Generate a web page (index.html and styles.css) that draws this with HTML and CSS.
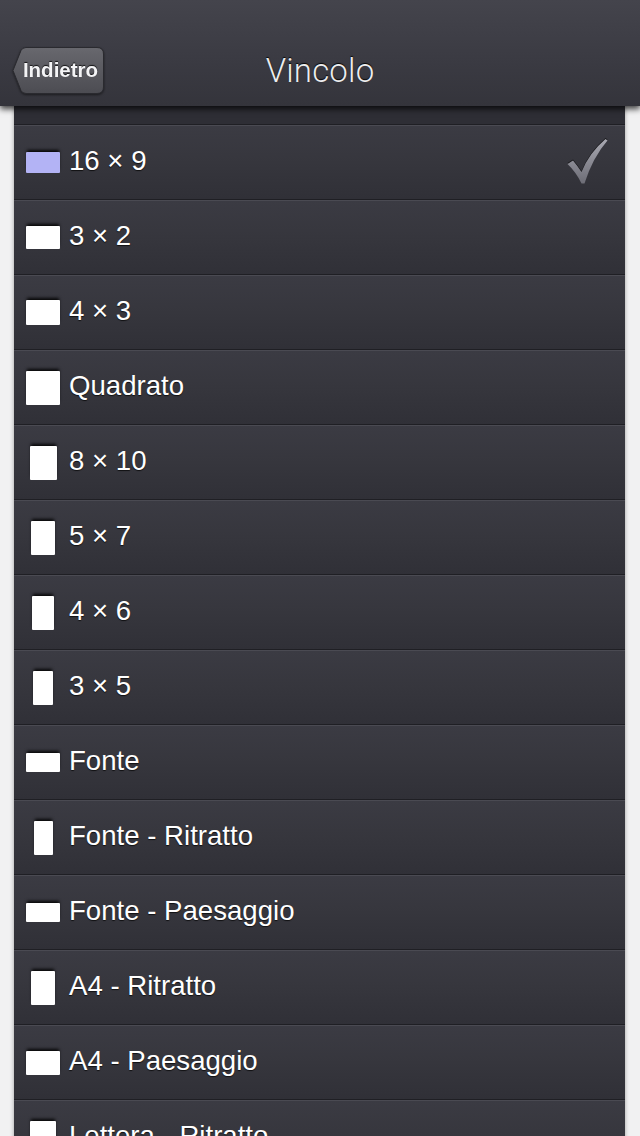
FILE: index.html
```html
<!DOCTYPE html>
<html lang="it">
<head>
<meta charset="utf-8">
<title>Vincolo</title>
<link rel="stylesheet" href="styles.css">
</head>
<body>
<header class="navbar">
  <div class="nav-left">
    <button class="back-btn">
      <svg class="back-shape" width="92" height="47" viewBox="0 0 92 47" aria-hidden="true">
        <defs>
          <linearGradient id="bg" x1="0" y1="0" x2="0" y2="1">
            <stop offset="0" stop-color="#68686e"/>
            <stop offset="1" stop-color="#4c4c52"/>
          </linearGradient>
        </defs>
        <path d="M1 23.5 L9 3.5 Q10.5 0.5 14 0.5 L85 0.5 Q91.5 0.5 91.5 7 L91.5 40 Q91.5 46.5 85 46.5 L14 46.5 Q10.5 46.5 9 43.5 Z" fill="url(#bg)" stroke="#2a2a2f" stroke-width="1"/>
      </svg>
      <span class="back-label">Indietro</span>
    </button>
  </div>
  <h1 class="nav-title">Vincolo</h1>
  <div class="nav-right"></div>
</header>

<main class="list">
  <div class="list-top"></div>
  <div class="row">
    <span class="icon-box"><span class="icon selected" style="width:34px;height:21px"></span></span>
    <span class="label">16 × 9</span>
    <svg class="check" width="41" height="47" viewBox="0 0 41 47" aria-hidden="true">
      <defs>
        <linearGradient id="cg" x1="0" y1="0" x2="0" y2="1">
          <stop offset="0" stop-color="#a9a9b2"/>
          <stop offset="1" stop-color="#6d6d76"/>
        </linearGradient>
      </defs>
      <path d="M0.5 26 L6 22.5 Q11 28.5 14.5 34 Q22 15 38.5 1 L40.5 2.5 Q26 19 17.5 45.5 L14.5 45.5 Q9 34 0.5 26 Z" fill="url(#cg)"/>
    </svg>
  </div>
  <div class="row"><span class="icon-box"><span class="icon" style="width:35px;height:23px"></span></span><span class="label">3 × 2</span></div>
  <div class="row"><span class="icon-box"><span class="icon" style="width:34px;height:25px"></span></span><span class="label">4 × 3</span></div>
  <div class="row"><span class="icon-box"><span class="icon" style="width:34px;height:34px"></span></span><span class="label">Quadrato</span></div>
  <div class="row"><span class="icon-box"><span class="icon" style="width:27px;height:34px"></span></span><span class="label">8 × 10</span></div>
  <div class="row"><span class="icon-box"><span class="icon" style="width:24px;height:34px"></span></span><span class="label">5 × 7</span></div>
  <div class="row"><span class="icon-box"><span class="icon" style="width:22px;height:34px"></span></span><span class="label">4 × 6</span></div>
  <div class="row"><span class="icon-box"><span class="icon" style="width:20px;height:34px"></span></span><span class="label">3 × 5</span></div>
  <div class="row"><span class="icon-box"><span class="icon" style="width:34px;height:19px"></span></span><span class="label">Fonte</span></div>
  <div class="row"><span class="icon-box"><span class="icon" style="width:19px;height:34px"></span></span><span class="label">Fonte - Ritratto</span></div>
  <div class="row"><span class="icon-box"><span class="icon" style="width:34px;height:19px"></span></span><span class="label">Fonte - Paesaggio</span></div>
  <div class="row"><span class="icon-box"><span class="icon" style="width:24px;height:34px"></span></span><span class="label">A4 - Ritratto</span></div>
  <div class="row"><span class="icon-box"><span class="icon" style="width:34px;height:24px"></span></span><span class="label">A4 - Paesaggio</span></div>
  <div class="row"><span class="icon-box"><span class="icon" style="width:26px;height:34px"></span></span><span class="label">Lettera - Ritratto</span></div>
</main>
</body>
</html>
```

FILE: styles.css
```css
* { box-sizing: border-box; }

html, body {
  margin: 0;
  padding: 0;
}

body {
  width: 640px;
  height: 1136px;
  overflow: hidden;
  background: #f1f1f2;
  font-family: "Liberation Sans", Arial, sans-serif;
}

.navbar {
  position: relative;
  z-index: 2;
  height: 106px;
  padding-top: 34px;
  display: grid;
  grid-template-columns: 1fr auto 1fr;
  align-items: center;
  background: linear-gradient(#44444c 0%, #3a3a42 60%, #34343b 100%);
  box-shadow: 0 3px 6px rgba(0, 0, 0, 0.75);
}

.nav-left {
  display: flex;
  align-items: center;
  padding-left: 12px;
}

.back-btn {
  position: relative;
  width: 92px;
  height: 47px;
  padding: 0 0 0 5px;
  margin: 0;
  border: 0;
  background: transparent;
  display: flex;
  align-items: center;
  justify-content: center;
  filter: drop-shadow(0 1px 1px rgba(0, 0, 0, 0.5));
}

.back-shape {
  position: absolute;
  left: 0;
  top: 0;
}

.back-label {
  position: relative;
  font-family: "Liberation Sans", Arial, sans-serif;
  font-weight: bold;
  font-size: 20.5px;
  color: #f4f4f6;
  text-shadow: 0 -1px 1px rgba(0, 0, 0, 0.8);
}

.nav-title {
  margin: 0;
  font-family: Roboto, "Liberation Sans", sans-serif;
  font-weight: 300;
  font-size: 33px;
  color: #ececee;
  text-shadow: 0 -1px 1px rgba(0, 0, 0, 0.9);
  letter-spacing: 0.2px;
}

.list {
  margin: 0 15px 0 14px;
  background: #323239;
  box-shadow: 0 0 4px rgba(0, 0, 0, 0.35);
}

.list-top {
  height: 19px;
  background: #2e2e35;
  border-bottom: 1px solid #1f1f24;
}

.row {
  height: 75px;
  display: flex;
  align-items: center;
  padding-left: 12px;
  border-top: 1px solid #4a4a52;
  border-bottom: 1px solid #1f1f24;
  background: linear-gradient(#3b3b43 0%, #36363d 50%, #303037 100%);
}

.icon-box {
  width: 34px;
  height: 34px;
  display: flex;
  align-items: center;
  justify-content: center;
  flex: none;
}

.icon {
  display: block;
  background: #ffffff;
  border-radius: 1px;
  box-shadow: 0 -3px 3px -1px rgba(0, 0, 0, 0.9);
}

.icon.selected {
  background: #b3b3f5;
}

.label {
  margin-left: 9px;
  padding-bottom: 3px;
  font-size: 27.6px;
  color: #ffffff;
  text-shadow: 0 1px 1px rgba(0, 0, 0, 0.7);
  white-space: nowrap;
}

.check {
  margin-left: auto;
  margin-right: 17px;
  margin-top: -3px;
  filter: drop-shadow(0 -1px 0 rgba(0, 0, 0, 0.6));
}
```
